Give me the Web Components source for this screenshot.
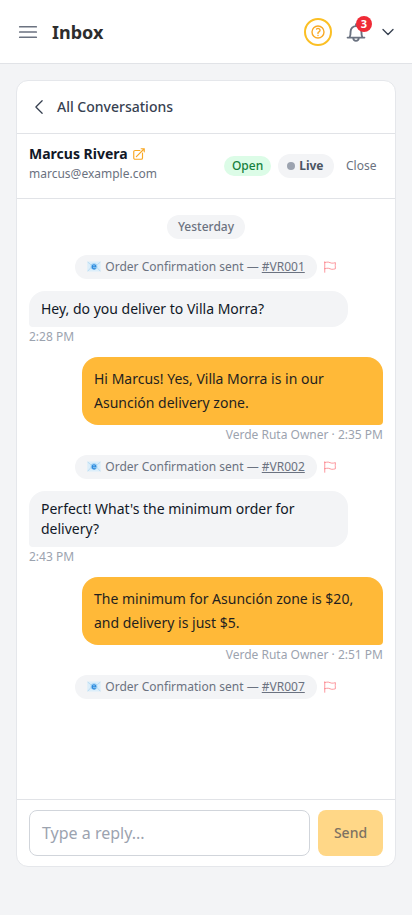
<!DOCTYPE html>
<html lang="en">
<head>
<meta charset="utf-8">
<title>Inbox</title>
<style>
html,body{margin:0;height:100%}
body{font-family:"Noto Sans",sans-serif;font-size:14px;line-height:20px;background:#f3f4f6;color:#111827;overflow:hidden}
</style>
</head>
<body>
<inbox-app></inbox-app>
<script>
const define = (name, css, html) => customElements.define(name, class extends HTMLElement {
  connectedCallback() {
    if (this.shadowRoot) return;
    const t = document.createElement('template');
    t.innerHTML = `<style>*{box-sizing:border-box}:host{box-sizing:border-box}${css}</style>${typeof html === 'function' ? html(this) : html}`;
    this.attachShadow({mode: 'open'}).append(t.content.cloneNode(true));
  }
});

const icons = {
  menu: '<path d="M3.75 6.75h16.5M3.75 12h16.5m-16.5 5.25h16.5"/>',
  back: '<path d="M15.75 19.5 8.25 12l7.5-7.5"/>',
  down: '<path d="m19.5 8.25-7.5 7.5-7.5-7.5"/>',
  help: '<path d="M9.879 7.519c1.171-1.025 3.071-1.025 4.242 0 1.172 1.025 1.172 2.687 0 3.712-.203.179-.43.326-.67.442-.745.361-1.45.999-1.45 1.827v.75M21 12a9 9 0 1 1-18 0 9 9 0 0 1 18 0Zm-9 5.25h.008v.008H12v-.008Z"/>',
  bell: '<path d="M3.600 17.600h16.800M5.600 17.400c.9-1.400 1-3 1-5.900a5.400 5.400 0 0 1 10.800 0c0 2.900.1 4.500 1 5.900M12 6V4.300M9.200 18c.2 1.900 1.200 2.900 2.800 2.900s2.600-1 2.800-2.900"/>',
  open: '<path d="M13.5 6H5.25A2.25 2.25 0 0 0 3 8.25v10.5A2.25 2.25 0 0 0 5.25 21h10.5A2.25 2.25 0 0 0 18 18.75V10.5m-10.5 6L21 3m0 0h-5.25M21 3v5.25"/>',
  flag: '<path d="M3 3v1.5M3 21v-6m0 0 2.77-.693a9 9 0 0 1 6.208.682l.108.054a9 9 0 0 0 6.086.71l3.114-.732a48.524 48.524 0 0 1-.005-10.499l-3.11.732a9 9 0 0 1-6.085-.711l-.108-.054a9 9 0 0 0-6.208-.682L3 4.5M3 15V4.5"/>'
};
define('ui-icon', ':host{display:block;flex:none}svg{display:block}', el =>
  `<svg width="${el.getAttribute('size')}" height="${el.getAttribute('size')}" viewBox="0 0 24 24" fill="none" stroke="currentColor" stroke-width="${el.getAttribute('stroke') || 1.5}" stroke-linecap="round" stroke-linejoin="round">${icons[el.getAttribute('name')]}</svg>`);

define('mail-icon', ':host{display:inline-block;width:14px;height:11px;margin-right:1px;vertical-align:-1px}svg{display:block}',
  `<svg width="14" height="11" viewBox="0 0 14 11"><rect x=".3" y=".6" width="13.4" height="10" rx=".8" fill="#dceefa"/><path d="M.6 1l6.4 5.3L13.4 1M.6 10.3l4.5-5M13.4 10.3l-4.5-5" fill="none" stroke="#a9d3ef" stroke-width=".7"/><circle cx="7" cy="5.6" r="3.3" fill="#9bd0f5"/><path d="M5.200 5.800h3.600C8.800 3.100 5.300 3 5.200 5.700c0 2.300 2.200 2.600 3.400 1.600" fill="none" stroke="#2b88dc" stroke-width="1.1"/></svg>`);

define('app-header', `
:host{display:flex;align-items:center;height:64px;padding:0 16px;background:#fff;border-bottom:1px solid #e1e3e7;color:#6b7280;flex:none}
h1{margin:0 auto 0 12px;font-size:18px;line-height:28px;font-weight:700;color:#2d2d2d}
.help{display:grid;place-items:center;width:28px;height:28px;border:2px solid #fbbf24;border-radius:50%;color:#f9a825}
.bell{position:relative;margin-left:12px}
.badge{position:absolute;right:-4px;top:-4px;width:16px;height:16px;border-radius:50%;background:#ef2b36;color:#fff;font-size:11px;line-height:16px;font-weight:700;text-align:center}
.down{margin:0 0 0 12px;color:#374151}`, `
<ui-icon name="menu" size="24" stroke="1.7"></ui-icon><h1>Inbox</h1>
<div class="help"><ui-icon name="help" size="16" stroke="2.1"></ui-icon></div>
<div class="bell"><ui-icon name="bell" size="24" stroke="1.9"></ui-icon><span class="badge">3</span></div>
<ui-icon class="down" name="down" size="16" stroke="2"></ui-icon>`);

define('back-bar', `
:host{display:flex;align-items:center;gap:8px;height:53px;padding:0 12px;border-bottom:1px solid #e1e3e7;color:#374151;font-weight:500;flex:none}`,
`<ui-icon name="back" size="20"></ui-icon><slot></slot>`);

define('contact-bar', `
:host{display:flex;align-items:center;height:65px;padding:0 12px;border-bottom:1px solid #e1e3e7;font-size:12px;line-height:16px;flex:none}
.who{margin-right:auto;padding-bottom:6px}
.name{display:flex;align-items:center;gap:4px;font-size:14px;line-height:20px;font-weight:700;color:#111827}
.name ui-icon{color:#f9a825}
.mail{color:#6b7280;margin-top:2px}
.open{padding:2px 8px;border-radius:10px;background:#dcfce7;color:#15803d;font-weight:500}
.live{display:flex;align-items:center;gap:4px;margin-left:6.500px;padding:4px 10px 4px 9.500px;border-radius:12px;background:#f3f4f6;color:#4b5563;font-weight:700}
.live i{width:8px;height:8px;border-radius:50%;background:#9ca3af}
.close{margin:0 6.500px 0 12.500px;color:#6b7280}`, `
<div class="who"><div class="name"><slot></slot><ui-icon name="open" size="14" stroke="2"></ui-icon></div><div class="mail"><slot name="mail"></slot></div></div>
<span class="open">Open</span><span class="live"><i></i>Live</span><span class="close">Close</span>`);

define('day-label', `
:host{display:block;align-self:center;margin-bottom:4px;padding:4px 11.4px;border-radius:12px;background:#f3f4f6;color:#6b7280;font-size:12px;line-height:16px;font-weight:500}`, '<slot></slot>');

define('order-event', `
:host{display:flex;justify-content:center;align-items:center;gap:6px;font-size:12px;line-height:16px;color:#6b7280}
.pill{padding:4px 12.5px;border-radius:12px;background:#f3f4f6;white-space:nowrap}
ui-icon{color:#fb8a91}`,
`<span class="pill"><mail-icon></mail-icon> Order Confirmation sent — <u><slot></slot></u></span><ui-icon name="flag" size="14"></ui-icon>`);

define('chat-message', `
:host{display:flex;flex-direction:column;gap:2px}
.bubble{width:319px;padding:8px 12px;border-radius:16px 16px 16px 4px;background:#f3f4f6;color:#111827}
.time{font-size:12px;line-height:16px;color:#9ca3af}
:host([own]){align-items:flex-end}
:host([own]) .bubble{width:301px;padding:10px 12px;line-height:24px;border-radius:16px 16px 4px 16px;background:#ffb938;color:#1f1f1f}`,
`<div class="bubble"><slot></slot></div><div class="time"><slot name="time"></slot></div>`);

define('reply-bar', `
:host{display:flex;gap:8px;height:67px;padding:10px 12px;border-top:1px solid #e1e3e7;flex:none}
.field{flex:1;height:46px;padding:0 12px;border:1px solid #d1d5db;border-radius:8px;font-size:16px;line-height:44px;color:#9ca3af}
.send{width:65px;height:46px;border-radius:8px;background:#ffd787;color:#7d7262;font-weight:500;line-height:46px;text-align:center}`,
`<div class="field">Type a reply...</div><div class="send">Send</div>`);

define('inbox-app', `
:host{display:flex;flex-direction:column;height:915px}
main{flex:1;padding:16px 16px 48px;display:flex;min-height:0}
section{flex:1;display:flex;flex-direction:column;background:#fff;border:1px solid #e5e7eb;border-radius:12px;overflow:hidden}
.thread{flex:1;display:flex;flex-direction:column;gap:12px;padding:16px 12px;min-height:0}`, `
<app-header></app-header>
<main><section>
<back-bar>All Conversations</back-bar>
<contact-bar>Marcus Rivera<span slot="mail">marcus@example.com</span></contact-bar>
<div class="thread">
<day-label>Yesterday</day-label>
<order-event>#VR001</order-event>
<chat-message>Hey, do you deliver to Villa Morra?<span slot="time">2:28 PM</span></chat-message>
<chat-message own>Hi Marcus! Yes, Villa Morra is in our Asunción delivery zone.<span slot="time">Verde Ruta Owner · 2:35 PM</span></chat-message>
<order-event>#VR002</order-event>
<chat-message>Perfect! What's the minimum order for delivery?<span slot="time">2:43 PM</span></chat-message>
<chat-message own>The minimum for Asunción zone is $20, and delivery is just $5.<span slot="time">Verde Ruta Owner · 2:51 PM</span></chat-message>
<order-event>#VR007</order-event>
</div>
<reply-bar></reply-bar>
</section></main>`);
</script>
</body>
</html>
